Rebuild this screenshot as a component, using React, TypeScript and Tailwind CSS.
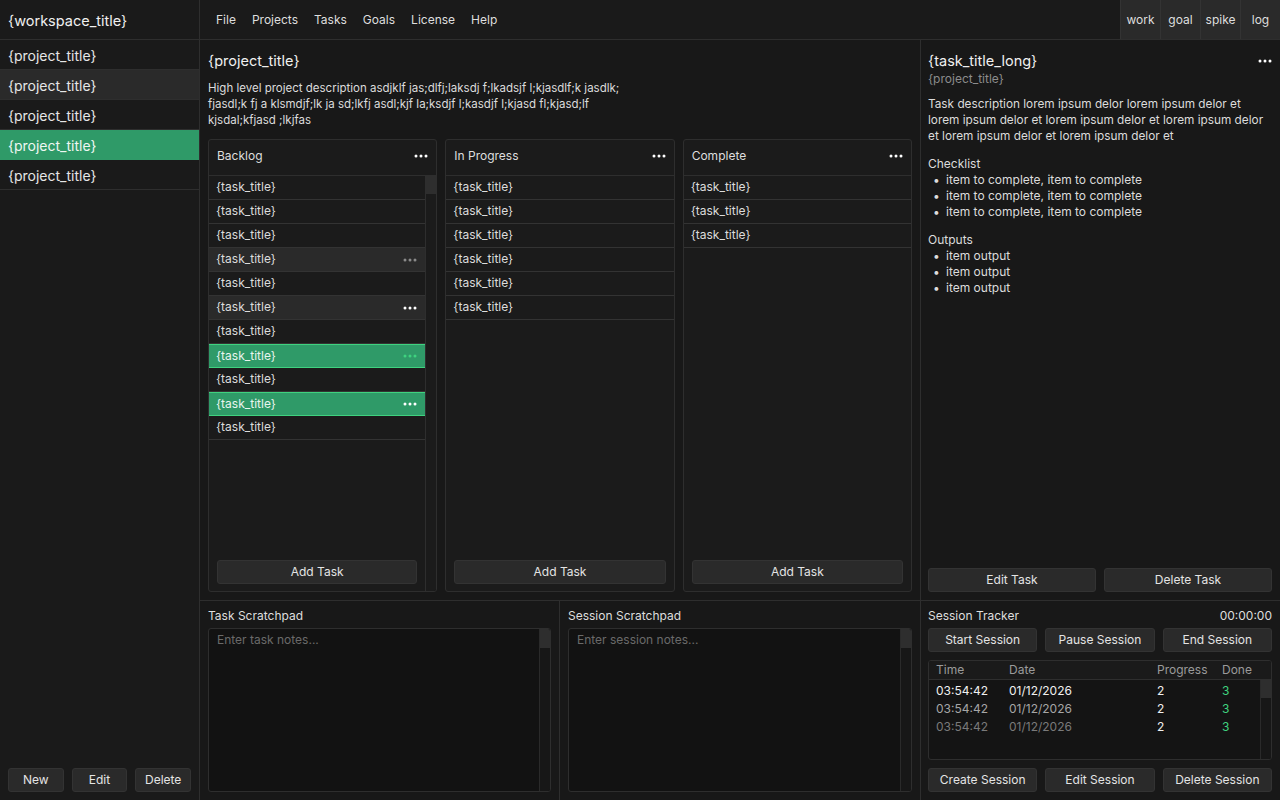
import React from 'react';

const FONT = { fontFamily: 'Inter, "Noto Sans", sans-serif' };

function Dots({ color = '#ffffff' }: { color?: string }) {
  return (
    <svg width="14" height="4" viewBox="0 0 14 4" fill={color}>
      <circle cx="2" cy="2" r="1.5" />
      <circle cx="7" cy="2" r="1.5" />
      <circle cx="12" cy="2" r="1.5" />
    </svg>
  );
}

function Btn({ children, className = '' }: { children: React.ReactNode; className?: string }) {
  return (
    <button
      className={`h-[24px] rounded-[3px] border border-[#333333] bg-[#2a2a2a] text-[12px] text-[#e4e4e4] ${className}`}
    >
      {children}
    </button>
  );
}

type TaskState = 'normal' | 'hover' | 'hoverDots' | 'selected' | 'selectedDots';

function TaskRow({ state = 'normal' }: { state?: TaskState }) {
  const green = state === 'selected' || state === 'selectedDots';
  const hover = state === 'hover' || state === 'hoverDots';
  return (
    <div
      className={`flex h-[24px] items-center justify-between pl-[7px] pr-2 text-[12px] ${
        green
          ? 'border-y border-[#3fd27f] bg-[#2f9a68] text-[#e8f5ee]'
          : hover
            ? 'border-b border-[#333333] bg-[#2a2a2a] text-[#dcdcdc]'
            : 'border-b border-[#333333] text-[#dcdcdc]'
      }`}
    >
      <span className="pb-[1px]">{'{task_title}'}</span>
      {state === 'hover' && <Dots color="#8a8a8a" />}
      {state === 'hoverDots' && <Dots color="#ffffff" />}
      {state === 'selected' && <Dots color="#3fd27f" />}
      {state === 'selectedDots' && <Dots color="#ffffff" />}
    </div>
  );
}

function Column({ title, tasks, scroll = false }: { title: string; tasks: TaskState[]; scroll?: boolean }) {
  return (
    <div className="flex flex-col overflow-hidden rounded-[3px] border border-[#2e2e2e] bg-[#1b1b1b]">
      <div className="flex h-[36px] shrink-0 items-center justify-between border-b border-[#2e2e2e] px-2 pb-[3px] text-[12px] text-[#dedede]">
        <span>{title}</span>
        <Dots />
      </div>
      <div className="flex flex-1">
        <div className="flex flex-1 flex-col">
          {tasks.map((t, i) => (
            <TaskRow key={i} state={t} />
          ))}
          <div className="flex-1" />
          <div className="px-2 pb-[7px]">
            <Btn className="w-full">Add Task</Btn>
          </div>
        </div>
        {scroll && (
          <div className="w-[11px] border-l border-[#2e2e2e] bg-[#1b1b1b]">
            <div className="h-[18px] bg-[#2e2e2e]" />
          </div>
        )}
      </div>
    </div>
  );
}

function Scratchpad({ label, placeholder, border }: { label: string; placeholder: string; border?: boolean }) {
  return (
    <div className={`flex flex-col px-2 pb-2 ${border ? 'border-r border-[#2e2e2e]' : ''}`}>
      <div className="flex h-[27px] items-center pt-[2px] text-[12px] text-[#dedede]">{label}</div>
      <div className="flex flex-1 overflow-hidden rounded-[3px] border border-[#2e2e2e] bg-[#121212]">
        <textarea
          className="flex-1 resize-none bg-transparent px-2 py-[2px] text-[12px] text-[#dedede] outline-none placeholder:text-[#6a6a6a]"
          placeholder={placeholder}
          style={FONT}
        />
        <div className="w-[11px] border-l border-[#2a2a2a] bg-[#171717]">
          <div className="h-[19px] bg-[#2e2e2e]" />
        </div>
      </div>
    </div>
  );
}

const sessions = [
  { time: '03:54:42', date: '01/12/2026', tone: 'text-[#f0f0f0]' },
  { time: '03:54:42', date: '01/12/2026', tone: 'text-[#a6a6a6]' },
  { time: '03:54:42', date: '01/12/2026', tone: 'text-[#7a7a7a]' },
];

export default function App() {
  const projects = [0, 1, 2, 3, 4];
  return (
    <div className="flex h-[800px] w-[1280px] overflow-hidden bg-[#181818] text-[#e6e6e6]" style={FONT}>
      {/* sidebar */}
      <div className="flex w-[200px] shrink-0 flex-col border-r border-[#2e2e2e] bg-[#1a1a1a]">
        <div className="flex h-[40px] shrink-0 items-center border-b border-[#2e2e2e] px-2 pt-[2px] text-[14.5px] text-[#f0f0f0]">
          {'{workspace_title}'}
        </div>
        {projects.map((p) => (
          <div
            key={p}
            className={`flex h-[30px] items-center border-b border-[#2e2e2e] px-2 pt-[2px] text-[14px] ${
              p === 1 ? 'bg-[#2a2a2a]' : p === 3 ? 'border-[#2f9a68] bg-[#2f9a68] text-[#eef8f2]' : ''
            }`}
          >
            {'{project_title}'}
          </div>
        ))}
        <div className="flex-1" />
        <div className="flex gap-2 px-2 pb-2">
          <Btn className="w-[56px]">New</Btn>
          <Btn className="w-[56px]">Edit</Btn>
          <Btn className="w-[56px]">Delete</Btn>
        </div>
      </div>

      {/* main */}
      <div className="flex flex-1 flex-col">
        <div className="flex h-[40px] shrink-0 items-stretch border-b border-[#2e2e2e] bg-[#1a1a1a]">
          <div className="flex flex-1 items-center gap-4 pl-4 text-[12px] text-[#dedede]">
            <span>File</span>
            <span>Projects</span>
            <span>Tasks</span>
            <span>Goals</span>
            <span>License</span>
            <span>Help</span>
          </div>
          {['work', 'goal', 'spike', 'log'].map((t) => (
            <div
              key={t}
              className="flex w-[40px] items-center justify-center border-l border-[#333333] bg-[#2a2a2a] text-[12px] text-[#dedede]"
            >
              {t}
            </div>
          ))}
        </div>

        <div className="flex flex-1">
          {/* center */}
          <div className="flex w-[720px] flex-col">
            <div className="flex flex-1 flex-col px-2 pb-2">
              <div className="pt-[11px] text-[14.5px] leading-[20px] text-[#f0f0f0]">{'{project_title}'}</div>
              <div className="mt-[9px] whitespace-nowrap text-[11.5px] leading-[16px] text-[#dcdcdc]">
                <div>High level project description asdjklf jas;dlfj;laksdj f;lkadsjf l;kjasdlf;k jasdlk;</div>
                <div>fjasdl;k fj a klsmdjf;lk ja sd;lkfj asdl;kjf la;ksdjf l;kasdjf l;kjasd fl;kjasd;lf</div>
                <div>kjsdal;kfjasd ;lkjfas</div>
              </div>
              <div className="mt-[11px] grid flex-1 grid-cols-3 gap-2">
                <Column
                  title="Backlog"
                  scroll
                  tasks={[
                    'normal',
                    'normal',
                    'normal',
                    'hover',
                    'normal',
                    'hoverDots',
                    'normal',
                    'selected',
                    'normal',
                    'selectedDots',
                    'normal',
                  ]}
                />
                <Column title="In Progress" tasks={['normal', 'normal', 'normal', 'normal', 'normal', 'normal']} />
                <Column title="Complete" tasks={['normal', 'normal', 'normal']} />
              </div>
            </div>
            <div className="grid h-[200px] shrink-0 grid-cols-2 border-t border-[#2e2e2e]">
              <Scratchpad label="Task Scratchpad" placeholder="Enter task notes..." border />
              <Scratchpad label="Session Scratchpad" placeholder="Enter session notes..." />
            </div>
          </div>

          {/* right panel */}
          <div className="flex flex-1 flex-col border-l border-[#2e2e2e]">
            <div className="flex flex-1 flex-col pl-[7px] pr-2 pb-2">
              <div className="flex items-center justify-between pt-[11px]">
                <span className="text-[14.5px] leading-[20px] text-[#f0f0f0]">{'{task_title_long}'}</span>
                <Dots />
              </div>
              <div className="text-[12px] leading-[16px] text-[#8c8c8c]">{'{project_title}'}</div>
              <div className="mt-[9px] whitespace-nowrap text-[11.8px] leading-[16px] text-[#dcdcdc]">
                <div>Task description lorem ipsum delor lorem ipsum delor et</div>
                <div>lorem ipsum delor et lorem ipsum delor et lorem ipsum delor</div>
                <div>et lorem ipsum delor et lorem ipsum delor et</div>
              </div>
              <div className="mt-[12px] text-[12px] leading-[16px] text-[#dcdcdc]">
                <div>Checklist</div>
                {[0, 1, 2].map((i) => (
                  <div key={i} className="flex pl-[5px]">
                    <span className="w-[13px]">•</span>
                    <span>item to complete, item to complete</span>
                  </div>
                ))}
              </div>
              <div className="mt-[12px] text-[12px] leading-[16px] text-[#dcdcdc]">
                <div>Outputs</div>
                {[0, 1, 2].map((i) => (
                  <div key={i} className="flex pl-[5px]">
                    <span className="w-[13px]">•</span>
                    <span>item output</span>
                  </div>
                ))}
              </div>
              <div className="flex-1" />
              <div className="grid grid-cols-2 gap-2">
                <Btn>Edit Task</Btn>
                <Btn>Delete Task</Btn>
              </div>
            </div>

            <div className="flex h-[200px] shrink-0 flex-col border-t border-[#2e2e2e] pl-[7px] pr-2 pb-2">
              <div className="flex h-[27px] items-center justify-between pt-[2px] text-[12px] text-[#dedede]">
                <span>Session Tracker</span>
                <span>00:00:00</span>
              </div>
              <div className="grid grid-cols-3 gap-2">
                <Btn>Start Session</Btn>
                <Btn>Pause Session</Btn>
                <Btn>End Session</Btn>
              </div>
              <div className="mt-2 flex flex-1 flex-col overflow-hidden rounded-[3px] border border-[#2e2e2e] bg-[#141414]">
                <div className="flex h-[19px] shrink-0 items-center border-b border-[#2e2e2e] bg-[#1a1a1a] text-[12px] text-[#9a9a9a]">
                  <span className="w-[80px] pl-[7px]">Time</span>
                  <span className="w-[148px]">Date</span>
                  <span className="w-[65px]">Progress</span>
                  <span>Done</span>
                </div>
                <div className="flex flex-1">
                  <div className="flex-1 pt-[2px]">
                    {sessions.map((s, i) => (
                      <div key={i} className="flex h-[18px] items-center text-[12px]">
                        <span className={`w-[80px] pl-[7px] ${s.tone}`}>{s.time}</span>
                        <span className={`w-[148px] ${s.tone}`}>{s.date}</span>
                        <span className="w-[65px] text-[#f0f0f0]">2</span>
                        <span className="text-[#3fd27f]">3</span>
                      </div>
                    ))}
                  </div>
                  <div className="w-[11px] border-l border-[#2a2a2a] bg-[#171717]">
                    <div className="h-[18px] bg-[#2e2e2e]" />
                  </div>
                </div>
              </div>
              <div className="mt-2 grid grid-cols-3 gap-2">
                <Btn>Create Session</Btn>
                <Btn>Edit Session</Btn>
                <Btn>Delete Session</Btn>
              </div>
            </div>
          </div>
        </div>
      </div>
    </div>
  );
}
